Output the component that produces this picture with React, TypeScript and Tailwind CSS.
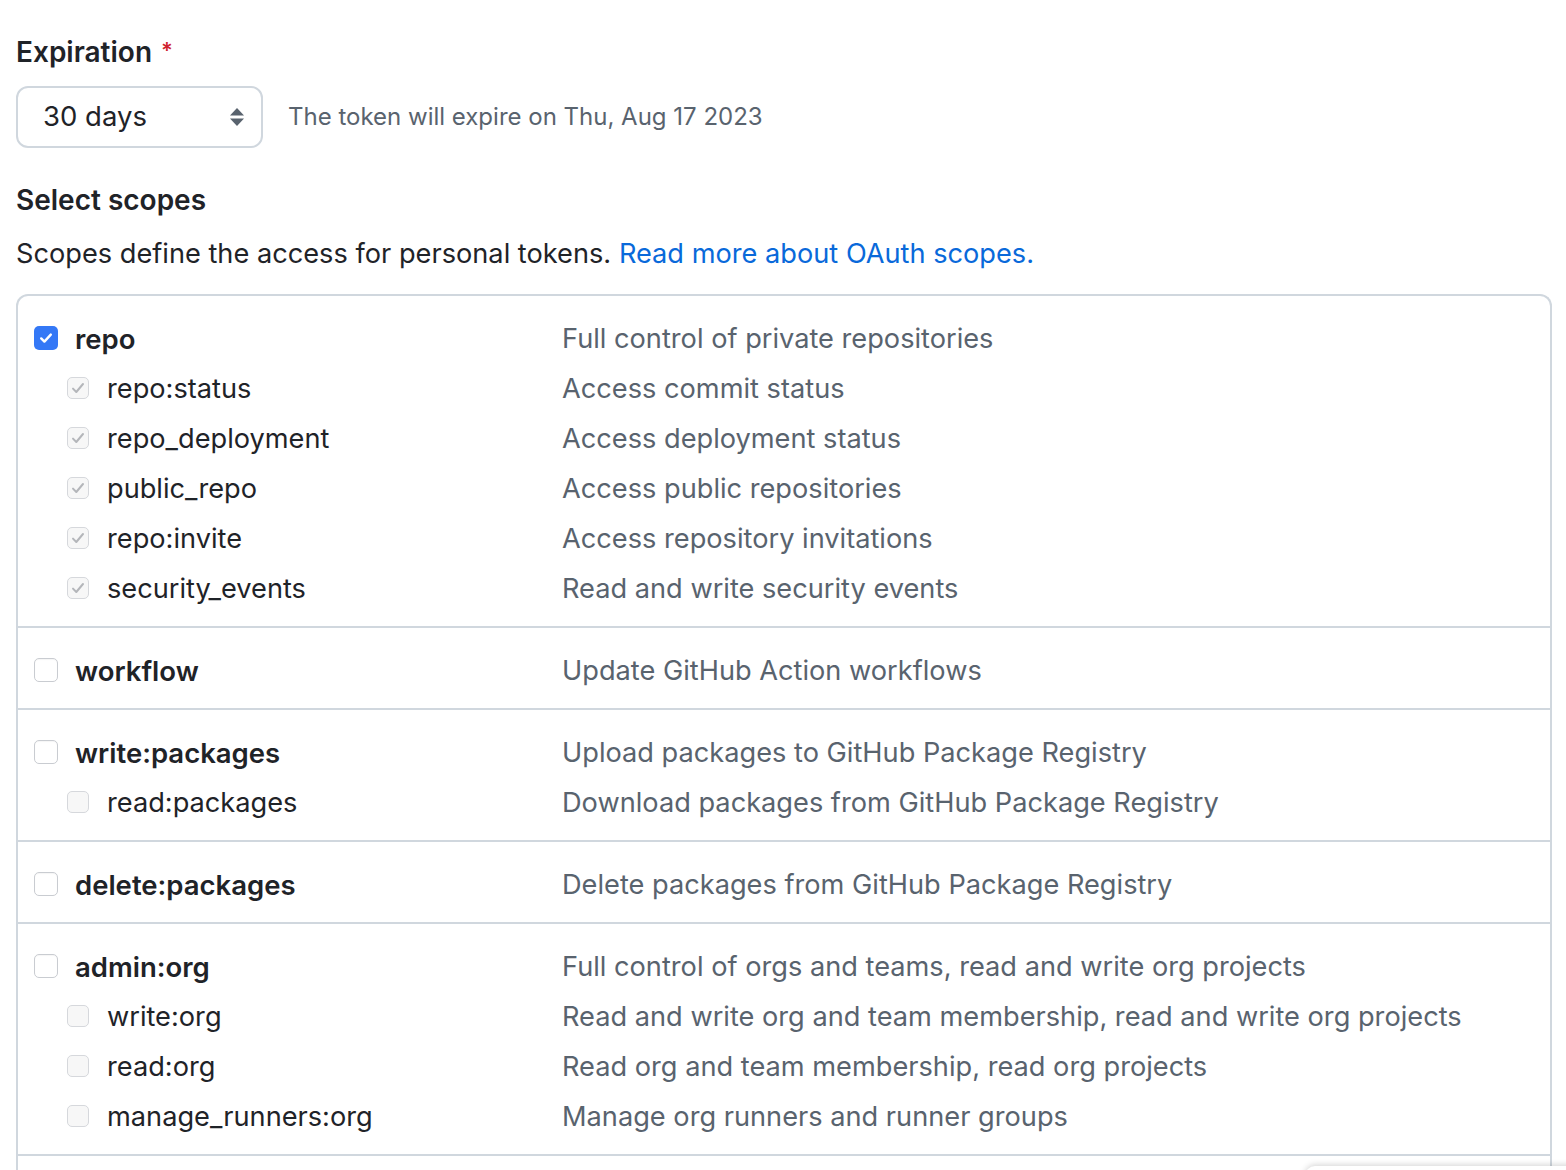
import React from "react";

type Scope = { name: string; desc: string; checked?: boolean };
type Group = { main: Scope; subs: Scope[] };

const groups: Group[] = [
  {
    main: { name: "repo", desc: "Full control of private repositories", checked: true },
    subs: [
      { name: "repo:status", desc: "Access commit status", checked: true },
      { name: "repo_deployment", desc: "Access deployment status", checked: true },
      { name: "public_repo", desc: "Access public repositories", checked: true },
      { name: "repo:invite", desc: "Access repository invitations", checked: true },
      { name: "security_events", desc: "Read and write security events", checked: true },
    ],
  },
  { main: { name: "workflow", desc: "Update GitHub Action workflows" }, subs: [] },
  {
    main: { name: "write:packages", desc: "Upload packages to GitHub Package Registry" },
    subs: [{ name: "read:packages", desc: "Download packages from GitHub Package Registry" }],
  },
  { main: { name: "delete:packages", desc: "Delete packages from GitHub Package Registry" }, subs: [] },
  {
    main: { name: "admin:org", desc: "Full control of orgs and teams, read and write org projects" },
    subs: [
      { name: "write:org", desc: "Read and write org and team membership, read and write org projects" },
      { name: "read:org", desc: "Read org and team membership, read org projects" },
      { name: "manage_runners:org", desc: "Manage org runners and runner groups" },
    ],
  },
];

function MainBox({ checked }: { checked?: boolean }) {
  if (checked) {
    return (
      <span className="flex h-[24px] w-[24px] shrink-0 items-center justify-center rounded-[5px] bg-[#3478f6]">
        <svg width="16" height="16" viewBox="0 0 16 16" fill="none">
          <path d="M3.2 8.4 6.4 11.6 12.8 4.6" stroke="white" strokeWidth="2.4" strokeLinecap="round" strokeLinejoin="round" />
        </svg>
      </span>
    );
  }
  return <span className="h-[24px] w-[24px] shrink-0 rounded-[5px] border border-[#c9ccd1] bg-white shadow-[inset_0_1px_1px_rgba(0,0,0,0.04)]" />;
}

function SubBox({ checked }: { checked?: boolean }) {
  return (
    <span className="flex h-[22px] w-[22px] shrink-0 items-center justify-center rounded-[5px] border border-[#d6d8dc] bg-[#f7f7f7]">
      {checked && (
        <svg width="16" height="16" viewBox="0 0 16 16" fill="none">
          <path d="M3 8.6 6.3 12 13 4" stroke="#b4b6ba" strokeWidth="2" strokeLinecap="round" strokeLinejoin="round" />
        </svg>
      )}
    </span>
  );
}

export default function App() {
  return (
    <div className="relative h-[1170px] overflow-hidden bg-white px-[16px] pt-[31px] font-['Inter','Noto_Sans',sans-serif] text-[#1f2328]">
      {/* Expiration */}
      <div className="text-[28px] font-semibold leading-[42px]">
        Expiration <span className="relative -top-[4px] ml-[2px] text-[22px] text-[#cf222e]">*</span>
      </div>
      <div className="mt-[11px] flex items-center">
        <div className="flex h-[62px] w-[247px] items-center justify-between rounded-[12px] border-2 border-[#d0d7de] pl-[25px] pr-[16px] text-[27.5px]">
          <span>30 days</span>
          <svg width="16" height="22" viewBox="0 0 16 22">
            <path d="M8 2 15 9.5H1Z" fill="#59636e" />
            <path d="M8 20 15 12.5H1Z" fill="#59636e" />
          </svg>
        </div>
        <span className="ml-[25px] text-[24px] text-[#59636e]">The token will expire on Thu, Aug 17 2023</span>
      </div>

      {/* Scopes */}
      <div className="mt-[31px] text-[28px] font-semibold leading-[42px]">Select scopes</div>
      <p className="mt-[12px] text-[27.2px] leading-[42px]">
        Scopes define the access for personal tokens.{" "}
        <a className="text-[#0969da]">Read more about OAuth scopes.</a>
      </p>

      <div className="mt-[19px] w-[1536px] rounded-t-[12px] border-x-2 border-t-2 border-[#d0d7de]">
        {groups.map((g) => (
          <div key={g.main.name} className="border-b-2 border-[#d0d7de] pb-[13px] pl-[16px] pt-[17px]">
            <div className="flex h-[50px] items-center">
              <div className="flex w-[528px] items-center gap-[17px]">
                <MainBox checked={g.main.checked} />
                <span className="pt-[3px] text-[27.5px] font-semibold">{g.main.name}</span>
              </div>
              <span className="pt-[3px] text-[27.2px] text-[#59636e]">{g.main.desc}</span>
            </div>
            {g.subs.map((s) => (
              <div key={s.name} className="flex h-[50px] items-center">
                <div className="flex w-[528px] items-center gap-[18px] pl-[33px]">
                  <SubBox checked={s.checked} />
                  <span className="pt-[3px] text-[27.2px]">{s.name}</span>
                </div>
                <span className="pt-[3px] text-[27.2px] text-[#59636e]">{s.desc}</span>
              </div>
            ))}
          </div>
        ))}
        <div className="h-[60px]" />
      </div>

      {/* floating panel peeking in at the bottom */}
      <div className="absolute left-[1305px] top-[1166px] h-[80px] w-[300px] rounded-[10px] bg-white shadow-[0_-1px_6px_rgba(0,0,0,0.18)]" />
    </div>
  );
}
